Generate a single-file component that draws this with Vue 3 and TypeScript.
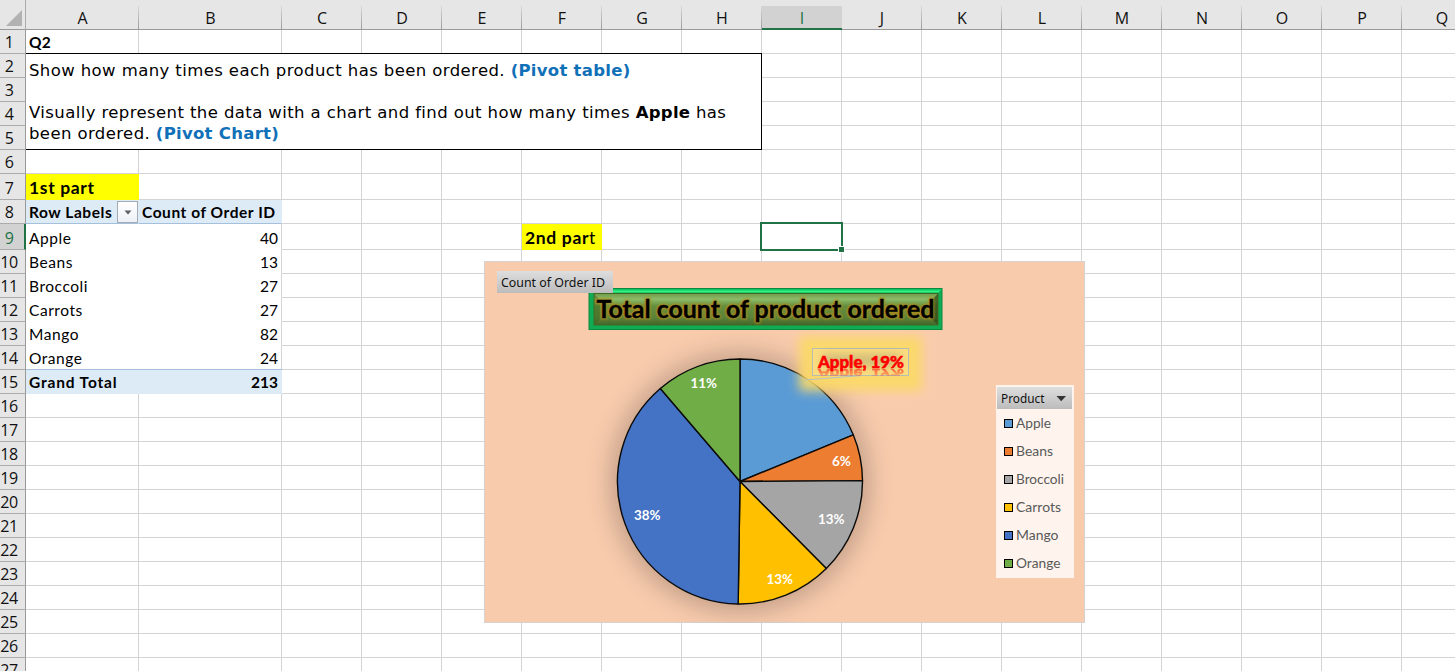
<script setup lang="ts">
interface CellData {
  text?: string
  kind?: string
}

interface Slice {
  name: string
  count: number
  color: string
  pct: string
  labelX: number
  labelY: number
  labelWidth: number
  legendWidth: number
}

const letters = 'ABCDEFGHIJKLMNOPQ'.split('')
const rowCount = 27

const slices: Slice[] = [
  { name: 'Apple', count: 40, color: '#5b9bd5', pct: '', labelX: 0, labelY: 0, labelWidth: 0, legendWidth: 35 },
  { name: 'Beans', count: 13, color: '#ed7d31', pct: '6%', labelX: 832, labelY: 466, labelWidth: 19, legendWidth: 37 },
  { name: 'Broccoli', count: 27, color: '#a5a5a5', pct: '13%', labelX: 818, labelY: 524, labelWidth: 26.5, legendWidth: 48 },
  { name: 'Carrots', count: 27, color: '#ffc000', pct: '13%', labelX: 766.5, labelY: 584, labelWidth: 26.5, legendWidth: 45 },
  { name: 'Mango', count: 82, color: '#4472c4', pct: '38%', labelX: 634, labelY: 520, labelWidth: 26.5, legendWidth: 42.5 },
  { name: 'Orange', count: 24, color: '#70ad47', pct: '11%', labelX: 690.5, labelY: 388, labelWidth: 26.5, legendWidth: 44.5 },
]
const total = slices.reduce((sum, s) => sum + s.count, 0)

const cells: Record<string, CellData> = {
  A1: { text: 'Q2', kind: 'bold' },
  A7: { text: '1st part', kind: 'part' },
  A8: { text: 'Row Labels', kind: 'band head' },
  B8: { text: 'Count of Order ID', kind: 'band head' },
  F9: { kind: 'part second' },
  I9: { kind: 'current' },
  A15: { text: 'Grand Total', kind: 'band foot' },
  B15: { text: String(total), kind: 'band foot num' },
}
slices.forEach((s, i) => {
  cells[`A${9 + i}`] = { text: s.name, kind: 'plain left' }
  cells[`B${9 + i}`] = { text: String(s.count), kind: 'plain num' }
})

const grid: { id: string; row: number; col: number; data: CellData }[] = []
for (let row = 1; row <= rowCount; row++) {
  letters.forEach((letter, col) => {
    if (row >= 2 && row <= 5 && col < 8) return
    const id = letter + row
    grid.push({ id, row, col, data: cells[id] ?? {} })
  })
}

const place = (row: number, col: number) => ({ gridRow: row + 1, gridColumn: col + 2 })

const cx = 740
const cy = 481.5
const radius = 122.5
let acc = 0
const arcs = slices.map((s) => {
  const a = (acc / total) * Math.PI * 2
  acc += s.count
  const b = (acc / total) * Math.PI * 2
  const point = (t: number) => `${(cx + radius * Math.sin(t)).toFixed(2)} ${(cy - radius * Math.cos(t)).toFixed(2)}`
  return { color: s.color, d: `M${cx} ${cy}L${point(a)}A${radius} ${radius} 0 0 1 ${point(b)}Z` }
})
</script>

<template>
  <main class="sheet">
    <div class="grid">
      <div class="corner"><svg width="17" height="16" viewBox="0 0 17 16"><path d="M16 0V16H0Z" fill="#b2b2b2" /></svg></div>
      <div
        v-for="(letter, i) in letters"
        :key="letter"
        class="colhead"
        :class="{ active: letter === 'I' }"
        :style="place(0, i)"
      >{{ letter }}</div>
      <div
        v-for="r in rowCount"
        :key="'r' + r"
        class="rowhead"
        :class="{ active: r === 9 }"
        :style="place(r, -1)"
      ><span>{{ r }}</span></div>

      <div
        v-for="c in grid"
        :key="c.id"
        class="cell"
        :class="c.data.kind"
        :style="place(c.row, c.col)"
      >
        <span v-if="c.data.text" class="txt">{{ c.data.text }}</span>
        <span v-if="c.id === 'F9'" class="txt"><b>2nd par</b>t</span>
        <span v-if="c.id === 'A8'" class="filter">
          <svg width="8" height="5" viewBox="0 0 8 5"><path d="M0.5 0.5H7.5L4 4.5Z" fill="#5a5f66" /></svg>
        </span>
        <span v-if="c.id === 'I9'" class="selection"><i class="handle"></i></span>
      </div>

      <div class="question">
        <p>Show how many times each product has been ordered. <b class="blue">(Pivot table)</b></p>
        <p>&nbsp;</p>
        <p>Visually represent the data with a chart and find out how many times <b>Apple</b> has</p>
        <p>been ordered. <b class="blue">(Pivot Chart)</b></p>
      </div>
    </div>

    <svg class="chart" width="601" height="362" viewBox="484 261 601 362">
      <defs>
        <filter id="soft" x="-30%" y="-30%" width="160%" height="160%"><feGaussianBlur stdDeviation="14" /></filter>
        <filter id="glow" x="-40%" y="-60%" width="180%" height="220%"><feGaussianBlur stdDeviation="5.5" /></filter>
        <filter id="halo" x="-10%" y="-40%" width="120%" height="180%"><feGaussianBlur stdDeviation="0.8" /></filter>
        <filter id="smudge" x="-20%" y="-60%" width="140%" height="220%"><feGaussianBlur stdDeviation="4" /></filter>
        <linearGradient id="btn" x1="0" y1="0" x2="0" y2="1">
          <stop offset="0" stop-color="#dedede" /><stop offset="1" stop-color="#bcbcbc" />
        </linearGradient>
        <linearGradient id="olive" x1="0" y1="0" x2="0" y2="1">
          <stop offset="0" stop-color="#6f9a4b" /><stop offset="0.18" stop-color="#8dbb68" />
          <stop offset="0.4" stop-color="#638e3e" /><stop offset="0.75" stop-color="#5c8439" />
          <stop offset="1" stop-color="#46652b" />
        </linearGradient>
        <linearGradient id="rim" x1="0" y1="0" x2="0" y2="1">
          <stop offset="0" stop-color="#0db859" /><stop offset="0.5" stop-color="#2bf584" /><stop offset="1" stop-color="#0b8a42" />
        </linearGradient>
        <linearGradient id="fade" gradientUnits="userSpaceOnUse" x1="0" y1="368" x2="0" y2="377">
          <stop offset="0" stop-color="#fff" stop-opacity="0.6" /><stop offset="1" stop-color="#fff" stop-opacity="0.15" />
        </linearGradient>
        <mask id="mirror" maskUnits="userSpaceOnUse" x="810" y="368" width="100" height="8">
          <rect x="810" y="368" width="100" height="8" fill="url(#fade)" />
        </mask>
      </defs>

      <rect x="484.5" y="261.5" width="600" height="361" fill="#f8cbad" stroke="#d6d2cf" />

      <circle :cx="cx" :cy="cy + 1" r="127" fill="#000" opacity="0.26" filter="url(#soft)" />
      <path v-for="a in arcs" :key="a.color" :d="a.d" :fill="a.color" stroke="#0a0a0a" stroke-width="1.4" stroke-linejoin="round" />

      <rect x="799" y="336" width="123" height="55" rx="3" fill="#fcda66" opacity="0.92" filter="url(#glow)" />
      <path d="M805 380L862 375.5" stroke="#b5c2c2" fill="none" />
      <rect x="812.5" y="348.5" width="96" height="27" fill="#fff" fill-opacity="0.14" stroke="#b7beb0" />
      <rect x="822" y="354" width="78" height="13" fill="#666" opacity="0.28" filter="url(#smudge)" />
      <text x="818" y="368" textLength="86" lengthAdjust="spacingAndGlyphs" class="callout">Apple, 19%</text>
      <g mask="url(#mirror)">
        <text x="818" y="0" textLength="86" lengthAdjust="spacingAndGlyphs" class="callout" transform="translate(0 368.5) scale(1 -0.75)">Apple, 19%</text>
      </g>

      <text
        v-for="s in slices.slice(1)"
        :key="s.name"
        :x="s.labelX"
        :y="s.labelY"
        :textLength="s.labelWidth"
        lengthAdjust="spacingAndGlyphs"
        class="pct"
      >{{ s.pct }}</text>

      <rect x="589" y="288.5" width="353" height="41" fill="#10ac54" stroke="#0b8a42" />
      <path d="M589 289H942L937 294H594Z" fill="url(#rim)" />
      <rect x="594" y="293.5" width="344" height="31.5" fill="url(#olive)" />
      <path d="M594 293.5L600 300V319L594 325Z" fill="#3d6420" opacity="0.45" />
      <path d="M938 293.5L932 300V319L938 325Z" fill="#2f4718" opacity="0.75" />
      <rect x="594" y="293.5" width="344" height="31.5" fill="none" stroke="#3f6b25" />
      <g filter="url(#halo)">
        <text x="596.5" y="317.7" textLength="338" lengthAdjust="spacingAndGlyphs" class="title halo">Total count of product ordered</text>
      </g>
      <text x="596.5" y="317.7" textLength="338" lengthAdjust="spacingAndGlyphs" class="title">Total count of product ordered</text>

      <rect x="497" y="271" width="116" height="22" fill="url(#btn)" />
      <text x="501" y="287" textLength="104" lengthAdjust="spacingAndGlyphs" class="button">Count of Order ID</text>

      <rect x="996" y="385" width="78" height="193" fill="#fef4ed" />
      <rect x="997" y="387" width="75" height="22" fill="url(#btn)" />
      <text x="1001" y="403" textLength="43.5" lengthAdjust="spacingAndGlyphs" class="button">Product</text>
      <path d="M1056.5 396H1066L1061.2 401.2Z" fill="#333" />
      <g v-for="(s, i) in slices" :key="s.name">
        <rect x="1004.5" :y="419.5 + i * 28" width="8" height="8" :fill="s.color" stroke="#000" />
        <text x="1016" :y="428 + i * 28" :textLength="s.legendWidth" lengthAdjust="spacingAndGlyphs" class="legend">{{ s.name }}</text>
      </g>
    </svg>
  </main>
</template>

<style>
html,
body {
  margin: 0;
  overflow: hidden;
}
</style>

<style scoped>
.sheet {
  position: relative;
  width: 1455px;
  height: 671px;
  overflow: hidden;
  background: #fff;
  font-family: Lato, "Liberation Sans", sans-serif;
  color: #000;
}
.grid {
  display: grid;
  width: 1522px;
  grid-template-columns: 26px 113px 143px repeat(15, 80px);
  grid-template-rows: 30px repeat(6, 24px) 26px 24px 26px repeat(18, 24px);
}
.corner {
  grid-area: 1 / 1;
  box-sizing: border-box;
  background: #e6e6e6;
  border-right: 1px solid #ababab;
  border-bottom: 1px solid #999;
  padding: 10px 0 0 6px;
  line-height: 0;
}
.colhead {
  box-sizing: border-box;
  padding-top: 6px;
  height: 30px;
  text-align: center;
  font: 16px/25px "Open Sans", sans-serif;
  color: #111;
  border-bottom: 1px solid #999;
  background:
    linear-gradient(#d8d8d8, #999) right 0 top 6px / 1px 24px no-repeat,
    #e6e6e6;
}
.colhead.active {
  color: #217346;
  border-bottom: 2px solid #217346;
  background: linear-gradient(#d2d2d2, #d2d2d2) 0 6px / 100% 24px no-repeat, #e6e6e6;
}
.rowhead {
  box-sizing: border-box;
  display: flex;
  align-items: flex-end;
  background: #e6e6e6;
  border-right: 1px solid #999;
  border-bottom: 1px solid #ababab;
  font: 16px/22px "Open Sans", sans-serif;
  color: #111;
}
.rowhead span {
  width: 18px;
  display: flex;
  justify-content: center;
  letter-spacing: -0.4px;
}
.rowhead.active {
  background: #d2d2d2;
  color: #217346;
  border-right: 2px solid #217346;
}
.cell {
  box-sizing: border-box;
  display: flex;
  align-items: flex-end;
  padding: 0 3px;
  border-right: 1px solid #d4d4d4;
  border-bottom: 1px solid #d4d4d4;
  font-size: 15.5px;
  line-height: 21px;
  letter-spacing: 0.3px;
  white-space: nowrap;
  position: relative;
}
.bold {
  font-weight: 700;
}
.part {
  background: #ff0;
  border-color: #ff0;
  font-size: 17.5px;
  line-height: 23px;
  letter-spacing: 0.65px;
  font-weight: 700;
}
.second {
  font-weight: 400;
}
.band {
  background: #ddebf7;
  border-color: #ddebf7;
  font-weight: 700;
  letter-spacing: 0.55px;
}
.head {
  border-bottom-color: #a5c0dc;
}
.foot {
  box-shadow: 0 -1px #a5c0dc;
  letter-spacing: 0.85px;
}
.plain {
  border-bottom-color: transparent;
}
.left {
  border-right-color: transparent;
  letter-spacing: 0.55px;
}
.num {
  justify-content: flex-end;
  letter-spacing: 0;
}
.current {
  z-index: 1;
}
.filter {
  box-sizing: border-box;
  position: absolute;
  right: 0;
  bottom: 0;
  width: 21px;
  height: 22px;
  display: flex;
  align-items: center;
  justify-content: center;
  border: 1px solid #a3abb5;
  background: linear-gradient(#fff, #eef0f6);
}
.selection {
  position: absolute;
  box-sizing: border-box;
  inset: -2px -2px -2px -2px;
  border: 2px solid #217346;
}
.handle {
  position: absolute;
  right: -3px;
  bottom: -3px;
  width: 5px;
  height: 5px;
  background: #217346;
  box-shadow: 0 0 0 1px #fff;
}
.question {
  grid-area: 3 / 2 / 7 / 10;
  box-sizing: border-box;
  margin-top: -1px;
  border: 1px solid #000;
  border-left: 0;
  background: #fff;
  padding: 6px 0 0 3px;
  font: 16.5px/21px "DejaVu Sans", sans-serif;
  letter-spacing: 0.4px;
  white-space: nowrap;
  position: relative;
}
.question p {
  margin: 0;
}
.question b {
  letter-spacing: 0.28px;
}
.blue {
  color: #1070b8;
}
.chart {
  position: absolute;
  left: 484px;
  top: 261px;
}
.title {
  font: 700 24px Lato, sans-serif;
  fill: #000;
  stroke: #000;
  stroke-width: 0.3px;
}
.halo {
  fill: #b08a1c;
  stroke: #b08a1c;
  stroke-width: 2.4px;
}
.callout {
  font: 900 16.5px Lato, sans-serif;
  fill: #f00;
  stroke: #f00;
  stroke-width: 0.5px;
}
.pct {
  font: 700 13px Lato, sans-serif;
  fill: #fff;
}
.button {
  font: 12.5px "Noto Sans", sans-serif;
  fill: #111;
}
.legend {
  font: 13.5px Lato, sans-serif;
  fill: #595959;
}
</style>
